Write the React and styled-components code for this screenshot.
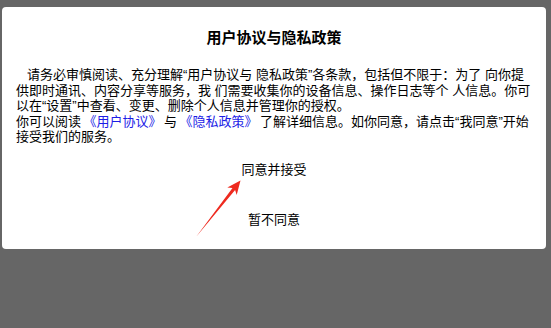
import React from "react";
import styled, { createGlobalStyle } from "styled-components";

const Global = createGlobalStyle`
  html, body { margin: 0; padding: 0; height: 100%; }
  body {
    background: #666666;
    font-family: "Liberation Sans", "Noto Sans CJK SC", sans-serif;
    color: #000;
  }
`;

const Page = styled.div`
  padding: 7px 0 0 2px;
`;

const Card = styled.div`
  position: relative;
  box-sizing: border-box;
  width: 544px;
  height: 242px;
  background: #ffffff;
  border-radius: 4px;
  padding: 21px 14px 9px 14px;
  display: flex;
  flex-direction: column;
`;

const Title = styled.h1`
  margin: 0;
  font-size: 15px;
  line-height: 20px;
  font-weight: bold;
  text-align: center;
`;

const Body = styled.div`
  margin-top: 19px;
  font-size: 13px;
  line-height: 15.6px;
`;

const Para = styled.p`
  margin: 0;
  text-indent: ${(p) => (p.$indent ? "11px" : "0")};
`;

const Link = styled.span`
  color: #1c1ce6;
  margin: 0 2.5px;
`;

const Actions = styled.div`
  margin-top: 5px;
  display: flex;
  flex-direction: column;
  align-items: center;
  gap: 10px;
`;

const Action = styled.button`
  border: none;
  background: transparent;
  padding: 0;
  font-family: inherit;
  font-size: 13px;
  line-height: 40px;
  height: 40px;
  color: #000;
`;

const ArrowMark = styled.svg`
  position: absolute;
  left: 188px;
  top: 168px;
  width: 56px;
  height: 68px;
  pointer-events: none;
`;

export default function App() {
  return (
    <>
      <Global />
      <Page>
        <Card>
          <Title>用户协议与隐私政策</Title>
          <Body>
            <Para $indent>
              请务必审慎阅读、充分理解“用户协议与 隐私政策”各条款，包括但不限于：为了 向你提供即时通讯、内容分享等服务，我 们需要收集你的设备信息、操作日志等个 人信息。你可以在“设置”中查看、变更、删除个人信息并管理你的授权。
            </Para>
            <Para>
              你可以阅读<Link>《用户协议》</Link>与<Link>《隐私政策》</Link>了解详细信息。如你同意，请点击“我同意”开始接受我们的服务。
            </Para>
          </Body>
          <Actions>
            <Action>同意并接受</Action>
            <Action>暂不同意</Action>
          </Actions>
          <ArrowMark viewBox="0 0 56 68">
            <polygon
              points="6,62 42.5,12.9 37.3,12.5 50.5,5.5 46.7,19.9 45.1,14.9"
              fill="#ee2a1f"
            />
          </ArrowMark>
        </Card>
      </Page>
    </>
  );
}
